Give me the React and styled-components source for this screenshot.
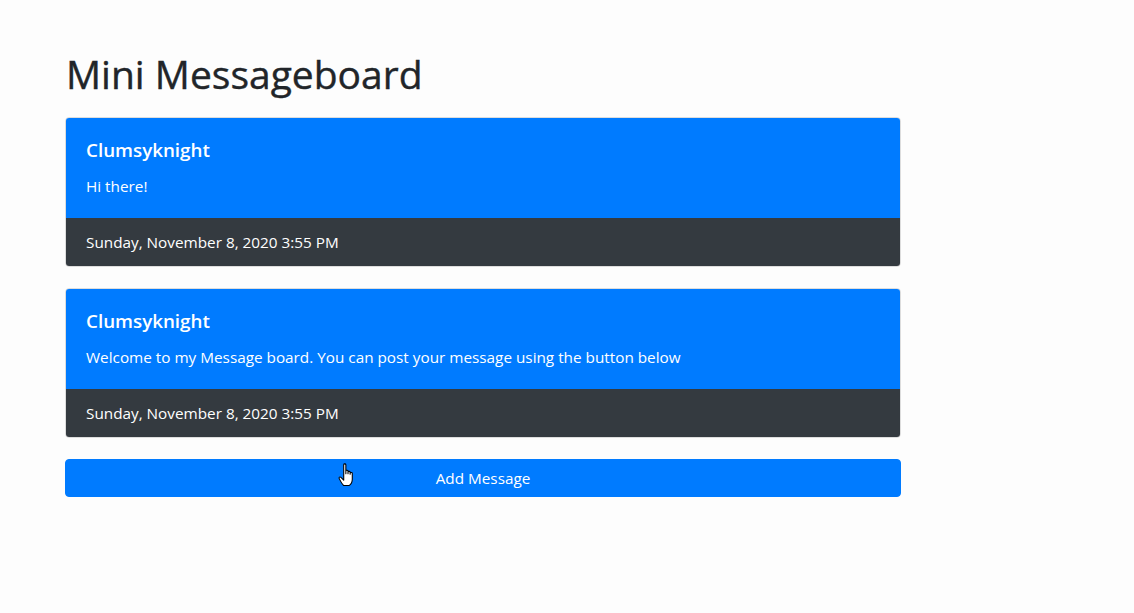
import React from "react";
import styled, { createGlobalStyle } from "styled-components";

const Global = createGlobalStyle`
  html, body { margin: 0; padding: 0; background: #fdfdfd; }
  body {
    font-family: "Open Sans", "Noto Sans", sans-serif;
    color: #212529;
    font-size: 15.3px;
    line-height: 1.5;
  }
  * { box-sizing: border-box; }
`;

const Page = styled.main`
  width: 836px;
  margin-left: 65px;
  padding-top: 50px;
  display: flex;
  flex-direction: column;
  gap: 21px;
`;

const Title = styled.h1`
  margin: 0 0 -2px 1px;
  font-size: 39px;
  font-weight: 500;
  line-height: 48px;
  color: #212529;
  -webkit-text-stroke: 0.4px #212529;
`;

const Card = styled.article`
  display: flex;
  flex-direction: column;
  border: 1px solid rgba(0, 0, 0, 0.125);
  border-radius: 4px;
  overflow: hidden;
`;

const Body = styled.div`
  background: #007bff;
  color: #fff;
  padding: 20px;
`;

const Author = styled.h5`
  margin: 0 0 12px;
  font-size: 18.8px;
  font-weight: 600;
  line-height: 24px;
`;

const Text = styled.p`
  margin: 0;
  font-size: 15.3px;
  line-height: 24px;
`;

const Footer = styled.div`
  background: #343a40;
  color: #fff;
  padding: 12px 20px;
  font-size: 15.3px;
  line-height: 24px;
`;

const ButtonWrap = styled.div`
  position: relative;
`;

const AddButton = styled.button`
  width: 100%;
  height: 38px;
  border: 1px solid #007bff;
  border-radius: 4px;
  background: #007bff;
  color: #fff;
  font-family: inherit;
  font-size: 15.3px;
  line-height: 24px;
  cursor: pointer;
`;

const Cursor = styled.svg`
  position: absolute;
  left: 272px;
  top: 3px;
  width: 22px;
  height: 30px;
  pointer-events: none;
`;

const messages = [
  { user: "Clumsyknight", text: "Hi there!", date: "Sunday, November 8, 2020 3:55 PM" },
  {
    user: "Clumsyknight",
    text: "Welcome to my Message board. You can post your message using the button below",
    date: "Sunday, November 8, 2020 3:55 PM",
  },
];

export default function App() {
  return (
    <>
      <Global />
      <Page>
        <Title>Mini Messageboard</Title>
        {messages.map((m, i) => (
          <Card key={i}>
            <Body>
              <Author>{m.user}</Author>
              <Text>{m.text}</Text>
            </Body>
            <Footer>{m.date}</Footer>
          </Card>
        ))}
        <ButtonWrap>
          <AddButton>Add Message</AddButton>
          <Cursor viewBox="0 0 20 28">
            <path
              d="M6 2.5 C6 1.5 8 1.5 8 2.5 L8 11 L8 8.5 C8 7.5 10 7.5 10 8.5 L10 11 L10 9.5 C10 8.5 12 8.5 12 9.5 L12 11.5 L12 10.5 C12 9.5 14 9.5 14 10.5 L14 16 C14 19 12.5 21 11 22 L6 22 C4.5 20.5 3 18 1.8 15.5 C1.2 14.3 2.5 13.5 3.4 14.3 L6 17 Z"
              fill="#fff"
              stroke="#000"
              strokeWidth="1"
              strokeLinejoin="round"
            />
          </Cursor>
        </ButtonWrap>
      </Page>
    </>
  );
}
